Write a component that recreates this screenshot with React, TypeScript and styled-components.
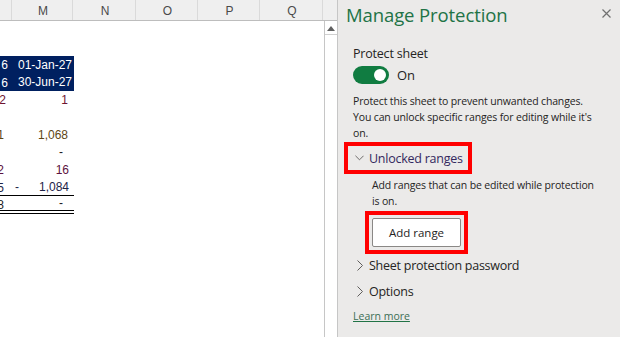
import styled, { createGlobalStyle } from "styled-components";

const GlobalStyle = createGlobalStyle`
    html, body {
        margin: 0;
        padding: 0;
        background: #ffffff;
    }
    body {
        font-family: "Liberation Sans", Arial, sans-serif;
    }
`;

type RowData = {
    l?: string;
    lPad?: number;
    m?: string;
    lead?: string;
    mPad?: number;
    color?: string;
    band?: boolean;
    rule?: "single" | "double";
};

// column L is only a sliver at the left edge, so only its last digit shows
const rows: RowData[] = [
    {},
    {},
    { l: "6", m: "01-Jan-27", band: true, mPad: 2, lPad: 5 },
    { l: "6", m: "30-Jun-27", band: true, mPad: 2, lPad: 5 },
    { l: "2", m: "1", color: "#6e1430", mPad: 6, lPad: 7 },
    {},
    { l: "1", m: "1,068", color: "#5e4714", mPad: 6, lPad: 9 },
    { m: "-", mPad: 11 },
    { l: "2", m: "16", color: "#5c1240", mPad: 5, lPad: 9 },
    { l: "5", lead: "-", m: "1,084", color: "#1e2448", mPad: 5, lPad: 9, rule: "single" },
    { l: "8", m: "-", mPad: 11, lPad: 9, rule: "double" },
];

const columns = ["M", "N", "O", "P", "Q"];
const colWidths = [61, 63, 62, 62, 63];

const Chevron = ({ open }: { open?: boolean }) => (
    <ChevronBox>
        {open ? (
            <svg width="10" height="6" viewBox="0 0 10 6">
                <polyline points="0.5,0.5 5,5 9.5,0.5" fill="none" stroke="#605e5c" strokeWidth="1" />
            </svg>
        ) : (
            <svg width="6" height="11" viewBox="0 0 6 11">
                <polyline points="0.5,0.5 5.5,5.5 0.5,10.5" fill="none" stroke="#605e5c" strokeWidth="1" />
            </svg>
        )}
    </ChevronBox>
);

export default function App() {
    return (
        <>
            <GlobalStyle />
            <Screen>
                <Sheet>
                    <ColumnHeader>
                        <HeaderCell $w={12} />
                        {columns.map((c, i) => (
                            <HeaderCell key={c} $w={colWidths[i]}>{c}</HeaderCell>
                        ))}
                        <HeaderCorner />
                    </ColumnHeader>
                    <SheetBody>
                        <Grid>
                            {rows.map((r, i) => (
                                <Row key={i}>
                                    <LCell $band={r.band} $rule={r.rule} $pad={r.lPad ?? 5} $color={r.color}>
                                        {r.l}
                                    </LCell>
                                    <MCell $band={r.band} $rule={r.rule} $pad={r.mPad ?? 5} $color={r.color}>
                                        {r.lead && <Lead>{r.lead}</Lead>}
                                        <span>{r.m}</span>
                                    </MCell>
                                </Row>
                            ))}
                        </Grid>
                        <Scrollbar>
                            <ScrollUp>
                                <svg width="8" height="5" viewBox="0 0 8 5">
                                    <polygon points="4,0 8,5 0,5" fill="#606060" />
                                </svg>
                            </ScrollUp>
                        </Scrollbar>
                    </SheetBody>
                </Sheet>

                <Pane>
                    <PaneHeader>
                        <PaneTitle>Manage Protection</PaneTitle>
                        <CloseButton>
                            <svg width="9" height="9" viewBox="0 0 9 9">
                                <path d="M0.5 0.5 L8.5 8.5 M8.5 0.5 L0.5 8.5" stroke="#707070" strokeWidth="1.2" />
                            </svg>
                        </CloseButton>
                    </PaneHeader>
                    <PaneBody>
                        <Label>Protect sheet</Label>
                        <ToggleRow>
                            <Toggle>
                                <Knob />
                            </Toggle>
                            <ToggleText>On</ToggleText>
                        </ToggleRow>
                        <Description>
                            Protect this sheet to prevent unwanted changes.<br />
                            You can unlock specific ranges for editing while it's<br />
                            on.
                        </Description>
                        <SectionHeader $highlight $top={5}>
                            <Chevron open />
                            <SectionTitle $tone="#33285e">Unlocked ranges</SectionTitle>
                        </SectionHeader>
                        <SectionText>
                            Add ranges that can be edited while protection<br />
                            is on.
                        </SectionText>
                        <Highlight>
                            <AddButton>Add range</AddButton>
                        </Highlight>
                        <SectionHeader $top={-1}>
                            <Chevron />
                            <SectionTitle>Sheet protection password</SectionTitle>
                        </SectionHeader>
                        <SectionHeader $top={2}>
                            <Chevron />
                            <SectionTitle>Options</SectionTitle>
                        </SectionHeader>
                        <LearnMore>Learn more</LearnMore>
                    </PaneBody>
                </Pane>
            </Screen>
        </>
    );
}

const Screen = styled.div`
    display: flex;
    width: 620px;
    height: 337px;
    overflow: hidden;
`;

const Sheet = styled.div`
    width: 337px;
    display: flex;
    flex-direction: column;
    background: #ffffff;
    border-right: 1px solid #c6c6c6;
`;

const ColumnHeader = styled.div`
    height: 20px;
    display: flex;
    background: #efefef;
    border-bottom: 1px solid #bdbdbd;
`;

const HeaderCell = styled.div<{ $w: number }>`
    width: ${(p) => p.$w}px;
    flex: none;
    display: flex;
    align-items: center;
    justify-content: center;
    font-size: 12px;
    color: #4a4a4a;
    border-right: 1px solid #dadada;
    box-sizing: border-box;
    padding-top: 2px;
    padding-left: 2px;
`;

const HeaderCorner = styled.div`
    flex: 1;
`;

const SheetBody = styled.div`
    flex: 1;
    display: flex;
`;

const Grid = styled.div`
    flex: 1;
    display: flex;
    flex-direction: column;
`;

const Row = styled.div`
    height: 17.5px;
    display: flex;
`;

const CellBase = styled.div<{ $band?: boolean; $rule?: string; $pad: number; $color?: string }>`
    box-sizing: border-box;
    height: 100%;
    overflow: hidden;
    white-space: nowrap;
    font-size: 12px;
    padding-right: ${(p) => p.$pad}px;
    background: ${(p) => (p.$band ? "#002060" : "transparent")};
    color: ${(p) => (p.$band ? "#ffffff" : p.$color ?? "#1a1a1a")};
    border-bottom: ${(p) =>
        p.$rule === "single" ? "1px solid #000" : p.$rule === "double" ? "4px double #000" : "none"};
`;

const LCell = styled(CellBase)`
    width: 13px;
    flex: none;
    direction: rtl;
    text-align: right;
    line-height: 18px;
`;

const MCell = styled(CellBase)`
    width: 61px;
    flex: none;
    display: flex;
    align-items: center;
    span:last-child {
        margin-left: auto;
    }
`;

const Lead = styled.span`
    padding-left: 2px;
`;

const Scrollbar = styled.div`
    width: 12px;
    border-left: 1px solid #c6c6c6;
    background: #ffffff;
`;

const ScrollUp = styled.div`
    height: 12px;
    margin-top: 1px;
    display: flex;
    align-items: center;
    justify-content: center;
    border-bottom: 1px solid #d0d0d0;
`;

const Pane = styled.div`
    flex: 1;
    background: #ebeae9;
    font-family: "Open Sans", "Noto Sans", sans-serif;
    color: #252423;
`;

const PaneHeader = styled.div`
    height: 29px;
    display: flex;
    align-items: center;
    justify-content: space-between;
    padding: 0 5px 0 8px;
`;

const PaneTitle = styled.div`
    font-size: 18.5px;
    color: #217346;
    letter-spacing: -0.1px;
`;

const CloseButton = styled.div`
    display: flex;
    padding: 4px;
    margin-top: -2px;
`;

const PaneBody = styled.div`
    padding: 0 14px 0 15px;
    display: flex;
    flex-direction: column;
    align-items: flex-start;
`;

const Label = styled.div`
    margin-top: 16px;
    font-size: 12.5px;
    line-height: 18px;
    letter-spacing: -0.2px;
`;

const ToggleRow = styled.div`
    margin-top: 2px;
    height: 20px;
    display: flex;
    align-items: center;
    gap: 8px;
`;

const Toggle = styled.div`
    width: 36px;
    height: 18px;
    border-radius: 9px;
    background: #107c41;
    display: flex;
    align-items: center;
    justify-content: flex-end;
    padding-right: 3px;
    box-sizing: border-box;
`;

const Knob = styled.div`
    width: 12px;
    height: 12px;
    border-radius: 50%;
    background: #ffffff;
`;

const ToggleText = styled.div`
    font-size: 13px;
`;

const Description = styled.div`
    margin-top: 8px;
    font-size: 10.5px;
    line-height: 16px;
    letter-spacing: -0.15px;
    white-space: nowrap;
`;

const SectionHeader = styled.div<{ $highlight?: boolean; $top: number }>`
    margin-top: ${(p) => p.$top}px;
    margin-left: -5px;
    height: 24px;
    display: flex;
    align-items: center;
    padding: 0 5px 0 7px;
    gap: 5px;
    box-shadow: ${(p) => (p.$highlight ? "0 0 0 4px #ff0000" : "none")};
`;

const ChevronBox = styled.div`
    width: 9px;
    display: flex;
    justify-content: center;
`;

const SectionTitle = styled.div<{ $tone?: string }>`
    font-size: 12.5px;
    letter-spacing: -0.25px;
    color: ${(p) => p.$tone ?? "#252423"};
`;

const SectionText = styled.div`
    margin-top: 7px;
    margin-left: 19px;
    font-size: 10.5px;
    line-height: 16px;
    letter-spacing: -0.15px;
    white-space: nowrap;
`;

const Highlight = styled.div`
    margin-top: 2px;
    margin-left: 12px;
    border: 4px solid #ff0000;
    padding: 3px;
    display: flex;
`;

const AddButton = styled.button`
    width: 89px;
    height: 29px;
    background: #ffffff;
    border: 1px solid #8a8886;
    border-radius: 2px;
    font-family: "Open Sans", "Noto Sans", sans-serif;
    font-size: 11.5px;
    color: #252423;
`;

const LearnMore = styled.a`
    margin-top: 5px;
    font-size: 10.5px;
    line-height: 16px;
    color: #3b6e55;
    text-decoration: underline;
    text-decoration-color: #217346;
`;
